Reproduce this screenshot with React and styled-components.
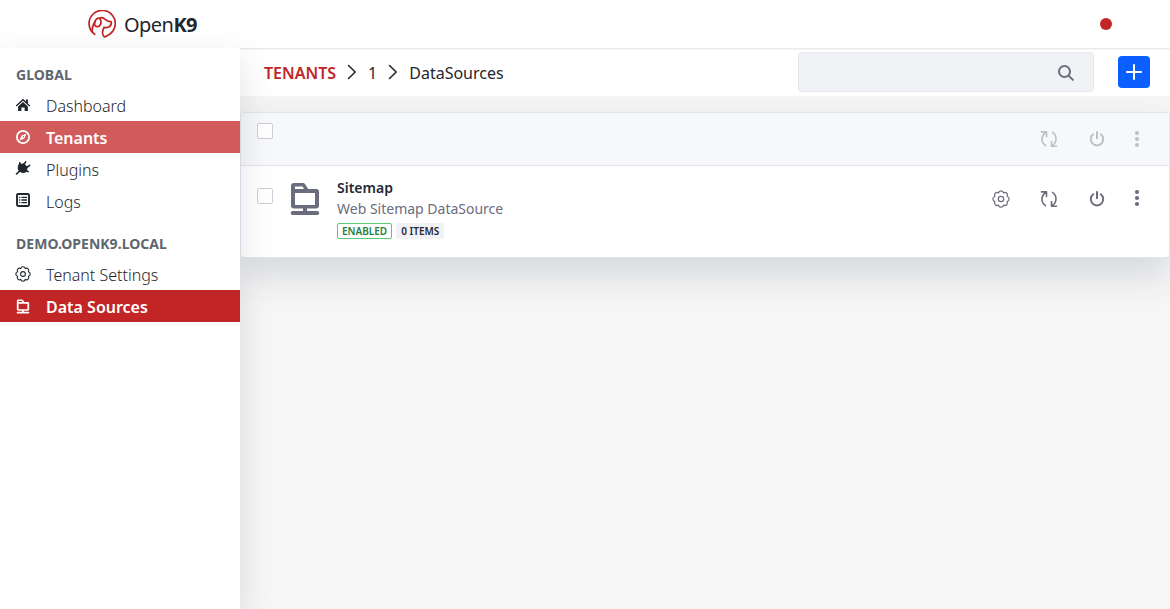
import React from "react";
import styled, { createGlobalStyle } from "styled-components";

const GlobalStyle = createGlobalStyle`
  *, *::before, *::after { box-sizing: border-box; }
  body {
    margin: 0;
    overflow: hidden;
    background: #f6f6f6;
    color: #1f262c;
    font-family: "Noto Sans", "Open Sans", sans-serif;
    font-size: 16px;
    line-height: 24px;
  }
`;

const Page = styled.div`
  height: 100vh;
  display: flex;
  flex-direction: column;
`;

const Header = styled.header`
  position: relative;
  z-index: 1;
  flex: none;
  height: 48px;
  display: flex;
  align-items: center;
  justify-content: space-between;
  padding: 0 58px 0 88px;
  background: #fff;
  box-shadow: 0 1px 2px rgba(0, 0, 0, 0.12);
`;

const Brand = styled.div`
  display: flex;
  align-items: center;
  gap: 8px;
  font-size: 20px;
  letter-spacing: -0.55px;
  padding-top: 2px;
  line-height: 28px;
  svg { margin-top: -2px; }
`;

const UserDot = styled.span`
  width: 12px;
  height: 12px;
  border-radius: 50%;
  background: #c22525;
`;

const Body = styled.div`
  flex: 1;
  display: flex;
  min-height: 0;
`;

const Sidebar = styled.nav`
  position: relative;
  z-index: 2;
  flex: none;
  width: 240px;
  background: #fff;
  box-shadow: 0 12px 32px rgba(39, 50, 73, 0.14);
`;

const SectionTitle = styled.h2`
  margin: 0;
  height: 41px;
  padding: 16px 16px 0;
  font-size: 14px;
  line-height: 22px;
  font-weight: 700;
  letter-spacing: 0.03px;
  color: #5e666e;
`;

const NavItem = styled.a`
  display: flex;
  align-items: center;
  gap: 15px;
  height: 32px;
  padding: 0 16px 0 15px;
  background: ${(p) => p.$bg || "transparent"};
  color: ${(p) => (p.$bg ? "#fff" : "#1f262c")};
  font-weight: ${(p) => (p.$bg ? 600 : 300)};
  span { padding-top: 2px; }
`;

const Main = styled.main`
  flex: 1;
  min-width: 0;
`;

const Toolbar = styled.div`
  height: 48px;
  display: flex;
  align-items: center;
  padding: 0 20px 0 24px;
  background: #fff;
`;

const Breadcrumb = styled.div`
  flex: 1;
  display: flex;
  align-items: center;
  padding-top: 2px;
  svg { margin: -3px 11px 0 11px; }
`;

const Crumb = styled.span`
  color: ${(p) => (p.$link ? "#c22525" : "inherit")};
  font-weight: ${(p) => (p.$link ? 600 : 400)};
`;

const SearchBox = styled.div`
  width: 296px;
  height: 40px;
  display: flex;
  align-items: center;
  justify-content: flex-end;
  padding: 2px 19px 0 0;
  margin-right: 24px;
  border: 1px solid #e7e7ed;
  border-radius: 4px;
  background: #f1f2f5;
  color: #6b6c7e;
`;

const AddButton = styled.button`
  width: 32px;
  height: 32px;
  display: grid;
  place-items: center;
  padding: 0;
  border: 0;
  border-radius: 4px;
  background: #0b5fff;
  color: #fff;
`;

const Card = styled.section`
  margin-top: 16px;
  border: 1px solid #e4e4ec;
  border-radius: 4px;
  background: #fff;
  box-shadow: 0 16px 36px rgba(39, 50, 73, 0.16);
`;

const ListHeader = styled.div`
  height: 53px;
  display: flex;
  align-items: center;
  padding: 0 22px 0 16px;
  border-bottom: 1px solid #e4e4ec;
  border-radius: 3px 3px 0 0;
  background: #f7f8fa;
`;

const ListRow = styled.div`
  height: 91px;
  display: flex;
  align-items: flex-start;
  padding: 11px 22px 0 16px;
`;

const Checkbox = styled.span`
  flex: none;
  width: 16px;
  height: 16px;
  border: 1px solid #cdced9;
  border-radius: 2px;
  background: #fff;
  margin-top: ${(p) => p.$top || 0}px;
  margin-bottom: ${(p) => p.$bottom || 0}px;
`;

const RowIcon = styled.div`
  display: flex;
  margin: 5px 16px 0;
  color: #6b6c7e;
`;

const RowText = styled.div`
  flex: 1;
  font-size: 14px;
  line-height: 21px;
`;

const RowTitle = styled.div`
  font-weight: 600;
  color: #272833;
`;

const RowSubtitle = styled.div`
  color: #6b6c7e;
`;

const Labels = styled.div`
  display: flex;
  gap: 4px;
  margin-top: 4px;
`;

const Label = styled.span`
  height: 16px;
  padding: 0 4px;
  border: 1px solid ${(p) => (p.$success ? "#5aca75" : "#f1f2f5")};
  border-radius: 2px;
  background: ${(p) => (p.$success ? "#fff" : "#f1f2f5")};
  color: ${(p) => (p.$success ? "#287d3c" : "#272833")};
  font-size: 10px;
  line-height: 15px;
  font-weight: 600;
`;

const Actions = styled.div`
  margin-left: auto;
  display: flex;
  align-items: center;
  gap: 30px;
  padding-top: ${(p) => p.$top || 0}px;
  color: #6b6c7e;
  opacity: ${(p) => (p.$disabled ? 0.4 : 1)};
  svg:last-child {
    margin-left: -8px;
    margin-right: 1px;
    margin-top: ${(p) => (p.$disabled ? 0 : -2)}px;
  }
`;

const stroke = { fill: "none", stroke: "currentColor", strokeLinecap: "round", strokeLinejoin: "round" };

const Logo = () => (
  <svg width="28" height="28" viewBox="0 0 28 28" {...stroke} stroke="#c22525" strokeWidth="1.7">
    <path d="M6.700 24.300A13.100 13.100 0 1 1 19.500 25.500Q18 26.500 16.400 27Q14.500 25.500 14.500 22.500Q14.500 20 16 17.700" />
    <path d="M4.300 21.600Q3.700 17 7.200 11.200" />
    <path d="M11.200 8.200Q9.300 7.600 7.700 10Q5.900 13 6.900 15.200Q8.300 17.300 10.600 16.400Q13.200 15 13 11.800Q12.800 9 11.200 8.200Q14.500 6.700 17.500 9.600Q19 11 23.300 11.900Q23.700 15.300 21.200 16.800Q18.800 17.900 16 17.400" />
  </svg>
);

const HomeIcon = () => (
  <svg width="16" height="16" viewBox="0 0 16 16" fill="currentColor">
    <path d="M8 1.700 10.900 4.400V2.400h2v4L15.300 8.600l-.9 1L8 3.800 1.600 9.600l-.9-1z" />
    <path d="M8 5.100 12.900 9.500V14H9.600V10.500H6.400V14H3.100V9.500z" />
  </svg>
);

const CompassIcon = () => (
  <svg width="16" height="16" viewBox="0 0 16 16" fill="none">
    <circle cx="8" cy="8" r="6.100" stroke="currentColor" strokeWidth="1.800" />
    <path d="M11.600 4.400 9.400 9.400 4.400 11.600 6.600 6.600z" fill="currentColor" />
    <circle cx="8.400" cy="7.700" r=".7" fill="#d15b5b" />
  </svg>
);

const PlugIcon = () => (
  <svg width="16" height="16" viewBox="0 1 16 16" {...stroke} strokeWidth="1.600">
    <path fill="currentColor" strokeWidth="1" d="M4.600 3.600 12 10.900Q10.500 12.500 8 12.400 5.600 12.300 4.200 10.800 2.700 8.700 3.300 6.500 3.700 4.600 4.600 3.600z" />
    <path fill="currentColor" strokeWidth="1" d="M5.500 4.500 9 3.800 12.200 7.200 11.500 10.300z" />
    <path d="M5.300 4 4.700 2.800M9 4.300l1.700-2.400M12 7.400l2.600-2.100M4.300 11.400 1.500 14M12 11l1 .7" />
  </svg>
);

const LogsIcon = () => (
  <svg width="16" height="16" viewBox="0 1 16 16" fill="none" stroke="currentColor">
    <rect x="2" y="2" width="12" height="12" rx="1.200" strokeWidth="1.900" />
    <path strokeWidth="1.300" d="M4.100 5.300h1.200M6.400 5.300H12M4.100 8h1.200M6.400 8H12M4.100 10.700h1.200M6.400 10.700H12" />
  </svg>
);

const gearPoint = (k) => {
  const a = ((22.5 + 45 * k) * Math.PI) / 180;
  return `${(8 + 5.8 * Math.cos(a)).toFixed(2)} ${(8 + 5.8 * Math.sin(a)).toFixed(2)}`;
};
const gearPath =
  `M${gearPoint(0)}` +
  [1, 2, 3, 4, 5, 6, 7, 8].map((k) => `A2.260 2.260 0 0 1 ${gearPoint(k)}`).join("") +
  "z";

const GearIcon = ({ size = 16 }) => (
  <svg width={size} height={size} viewBox="0 0 16 16" {...stroke} strokeWidth="1.100">
    <path d={gearPath} />
    <circle cx="8" cy="8" r="2.400" />
  </svg>
);

const FolderServerIcon = ({ width = 32, height = 34 }) => (
  <svg width={width} height={height} viewBox="0 0 32 34" fill="currentColor">
    <path fillRule="evenodd" d="M5 1h9q1.300 0 2 1l3.200 5H27q3 0 3 3v13.500q0 3-3 3H18V29h10.300a1.900 1.900 0 0 1 0 4H3.700a1.900 1.900 0 0 1 0-4H14v-2.500H5q-3 0-3-3V4q0-3 3-3zM6 4.600V7h9l-1.300-2.400zM6 11v12h20V11z" />
  </svg>
);

const ReloadIcon = () => (
  <svg width="18" height="18" viewBox="0 0 18 18" {...stroke} strokeWidth="1.600">
    <path d="M1.500 1.900h5v4.700M6.200 2.200Q2 4.500 2 9.300q0 3.900 3.500 6.400M16.500 16.200h-5v-4.700M11.800 15.900Q16 13.600 16 8.800q0-4-3.500-6.400" />
  </svg>
);

const PowerIcon = () => (
  <svg width="18" height="18" viewBox="0 0 18 18" {...stroke} strokeWidth="2">
    <path d="M9 1.900v6.300M5.200 4.300a6.200 6.200 0 1 0 7.600 0" />
  </svg>
);

const MoreIcon = () => (
  <svg width="18" height="18" viewBox="0 0 18 18" fill="currentColor">
    <circle cx="9" cy="3" r="2.100" /><circle cx="9" cy="9" r="2.100" /><circle cx="9" cy="15" r="2.100" />
  </svg>
);

const Chevron = () => (
  <svg width="10" height="16" viewBox="0 0 10 16" {...stroke} strokeWidth="1.600">
    <path d="m1.500 1.500 6.700 6.500-6.700 6.500" />
  </svg>
);

const SearchIcon = () => (
  <svg width="16" height="16" viewBox="0 0 16 16" {...stroke} strokeWidth="2">
    <circle cx="6.500" cy="6.500" r="5.500" /><path d="m10.600 10.600 4.300 4.300" />
  </svg>
);

const PlusIcon = () => (
  <svg width="16" height="16" viewBox="0 0 16 16" {...stroke} strokeWidth="2">
    <path d="M8 1v14M1 8h14" />
  </svg>
);

export default function App() {
  return (
    <Page>
      <GlobalStyle />
      <Header>
        <Brand><Logo /><span>Open<b>K9</b></span></Brand>
        <UserDot />
      </Header>
      <Body>
        <Sidebar>
          <SectionTitle>GLOBAL</SectionTitle>
          <NavItem><HomeIcon /><span>Dashboard</span></NavItem>
          <NavItem $bg="#d15b5b"><CompassIcon /><span>Tenants</span></NavItem>
          <NavItem><PlugIcon /><span>Plugins</span></NavItem>
          <NavItem><LogsIcon /><span>Logs</span></NavItem>
          <SectionTitle>DEMO.OPENK9.LOCAL</SectionTitle>
          <NavItem><GearIcon /><span>Tenant Settings</span></NavItem>
          <NavItem $bg="#c22525"><FolderServerIcon width={16} height={15} /><span>Data Sources</span></NavItem>
        </Sidebar>
        <Main>
          <Toolbar>
            <Breadcrumb>
              <Crumb $link>TENANTS</Crumb>
              <Chevron />
              <Crumb>1</Crumb>
              <Chevron />
              <Crumb>DataSources</Crumb>
            </Breadcrumb>
            <SearchBox><SearchIcon /></SearchBox>
            <AddButton aria-label="Add"><PlusIcon /></AddButton>
          </Toolbar>
          <Card>
            <ListHeader>
              <Checkbox $bottom={16} />
              <Actions $disabled><ReloadIcon /><PowerIcon /><MoreIcon /></Actions>
            </ListHeader>
            <ListRow>
              <Checkbox $top={11} />
              <RowIcon><FolderServerIcon /></RowIcon>
              <RowText>
                <RowTitle>Sitemap</RowTitle>
                <RowSubtitle>Web Sitemap DataSource</RowSubtitle>
                <Labels>
                  <Label $success>ENABLED</Label>
                  <Label>0 ITEMS</Label>
                </Labels>
              </RowText>
              <Actions $top={13}><GearIcon size={18} /><ReloadIcon /><PowerIcon /><MoreIcon /></Actions>
            </ListRow>
          </Card>
        </Main>
      </Body>
    </Page>
  );
}
